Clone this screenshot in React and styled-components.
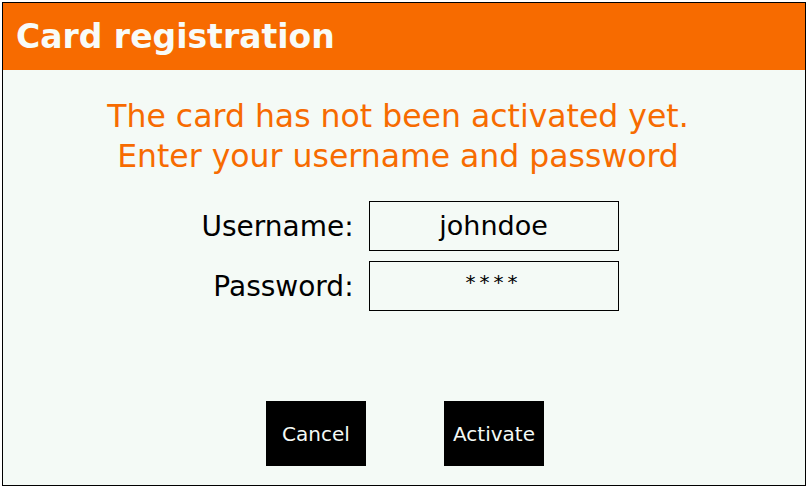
import React from 'react';
import styled, { createGlobalStyle } from 'styled-components';

const GlobalStyle = createGlobalStyle`
    body {
        margin: 0;
        background: #ffffff;
        font-family: "DejaVu Sans", "Liberation Sans", sans-serif;
    }
`;

const Frame = styled.div`
    margin: 2px;
    width: 802px;
    height: 482px;
    border: 1px solid #000;
    background: #f4faf6;
    display: flex;
    flex-direction: column;
`;

const Header = styled.header`
    height: 67px;
    background: #f76b00;
    display: flex;
    align-items: center;
    padding-left: 13px;
`;

const Title = styled.h1`
    margin: 0;
    color: #f8fbf8;
    font-size: 33px;
    font-weight: bold;
`;

const Body = styled.main`
    flex: 1;
    display: flex;
    flex-direction: column;
    align-items: center;
    padding-top: 26px;
`;

const Message = styled.p`
    margin: 0 12px 0 0;
    color: #f76b00;
    font-size: 31.5px;
    line-height: 40px;
    text-align: center;
`;

const Form = styled.div`
    display: grid;
    grid-template-columns: auto 250px;
    column-gap: 15px;
    row-gap: 10px;
    align-items: center;
    margin-top: 25px;
    margin-left: 12px;
`;

const Label = styled.label`
    font-size: 28px;
    color: #000;
    text-align: right;
`;

const Field = styled.div`
    box-sizing: border-box;
    height: 50px;
    border: 1px solid #000;
    display: flex;
    align-items: center;
    justify-content: center;
    font-size: ${p => (p.$secret ? '20px' : '27px')};
    letter-spacing: ${p => (p.$secret ? '4px' : '0')};
    padding-bottom: ${p => (p.$secret ? '8px' : '2px')};
    color: #000;
`;

const Actions = styled.div`
    margin-top: auto;
    margin-bottom: 19px;
    display: flex;
    gap: 78px;
    margin-left: 2px;
`;

const Button = styled.button`
    width: 100px;
    height: 65px;
    border: none;
    background: #000;
    color: #f4faf6;
    font-family: "DejaVu Sans", "Liberation Sans", sans-serif;
    font-size: 20px;
    padding: 0;
`;

export default function App() {
    return (
        <>
            <GlobalStyle />
            <Frame>
                <Header>
                    <Title>Card registration</Title>
                </Header>
                <Body>
                    <Message>
                        The card has not been activated yet.
                        <br />
                        Enter your username and password
                    </Message>
                    <Form>
                        <Label>Username:</Label>
                        <Field>johndoe</Field>
                        <Label>Password:</Label>
                        <Field $secret>****</Field>
                    </Form>
                    <Actions>
                        <Button>Cancel</Button>
                        <Button>Activate</Button>
                    </Actions>
                </Body>
            </Frame>
        </>
    );
}
